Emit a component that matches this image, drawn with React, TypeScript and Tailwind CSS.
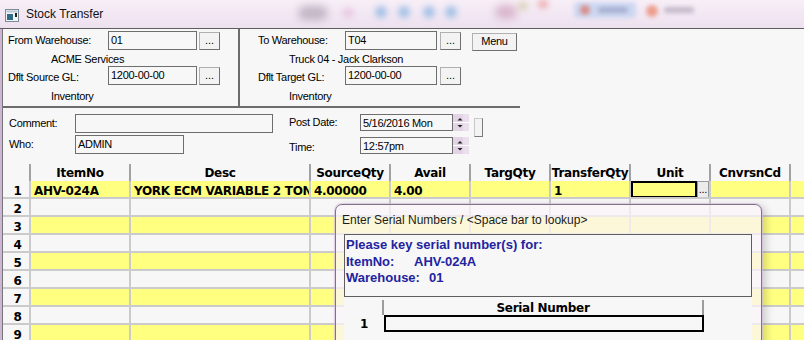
import React from "react";

const sans = "font-['Liberation_Sans',Arial,sans-serif]";
const lbl = `${sans} text-[11px] tracking-[-0.3px] text-black whitespace-nowrap`;
const gridFont = "font-['DejaVu_Sans',Verdana,sans-serif] font-bold text-[12px] tracking-[-0.3px] text-black whitespace-nowrap";

const columns = [
  { title: "ItemNo", w: "w-[100px]" },
  { title: "Desc", w: "w-[180px]" },
  { title: "SourceQty", w: "w-[80px]" },
  { title: "Avail", w: "w-[80px]" },
  { title: "TargQty", w: "w-[80px]" },
  { title: "TransferQty", w: "w-[80px]" },
  { title: "Unit", w: "w-[80px]" },
  { title: "CnvrsnCd", w: "w-[80px]" },
  { title: "", w: "w-[40px]" },
];

const firstRow = ["AHV-024A", "YORK ECM VARIABLE 2 TON", "4.00000", "4.00", "", "1", "", "", ""];

function Field({ w, h, value, muted }: { w: string; h: string; value?: string; muted?: boolean }) {
  return (
    <div className={`${w} ${h} shrink-0 border border-[#6e6e6e] bg-[#f7f7f7] pl-[2px] pt-[2px] ${lbl} leading-[13px] ${muted ? "text-[#8c8c8c]" : ""}`}>
      {value}
    </div>
  );
}

function Dots({ ml }: { ml: string }) {
  return (
    <div className={`${ml} flex h-[18px] w-[21px] shrink-0 items-end justify-center border border-[#b0b0b0] border-b-[#6f6f6f] border-r-[#6f6f6f] bg-[#f3f3f3] pb-[3px] ${sans} text-[11px] leading-none`}>
      ...
    </div>
  );
}

function Spinner() {
  return (
    <svg width="16" height="17" viewBox="0 0 16 17" className="shrink-0">
      <rect width="16" height="17" fill="#eadfec" />
      <rect x="0" y="0" width="10" height="17" fill="#e2d3e5" />
      <line x1="0" y1="8.5" x2="16" y2="8.5" stroke="#ffffff" />
      <path d="M4.5 6.5h5L7 4z" fill="#222" />
      <path d="M4.5 11h5L7 13.5z" fill="#222" />
    </svg>
  );
}

export default function App() {
  return (
    <div className="relative h-[340px] w-[804px] overflow-hidden bg-[#f7f7f7]">
      {/* Title bar */}
      <div className="relative flex h-[29px] items-center overflow-hidden border-b border-[#5e5e5e] bg-[linear-gradient(to_bottom,#f7eff7,#ede1ef)]">
        <span className="absolute left-[298px] top-[6px] h-[14px] w-[30px] rounded-full bg-[#a092a6] opacity-60 blur-[4px]" />
        <span className="absolute left-[342px] top-[8px] h-[10px] w-[12px] rounded-full bg-[#e2b4d6] opacity-60 blur-[3px]" />
        <span className="absolute left-[375px] top-[6px] h-[12px] w-[12px] rounded-full bg-[#6fa6de] opacity-60 blur-[3px]" />
        <span className="absolute left-[398px] top-[6px] h-[12px] w-[12px] rounded-full bg-[#6fa6de] opacity-60 blur-[3px]" />
        <span className="absolute left-[423px] top-[6px] h-[12px] w-[12px] rounded-full bg-[#6fa6de] opacity-60 blur-[3px]" />
        <span className="absolute left-[445px] top-[6px] h-[12px] w-[12px] rounded-full bg-[#6fa6de] opacity-60 blur-[3px]" />
        <span className="absolute left-[495px] top-[5px] h-[14px] w-[22px] rounded-full bg-[#c792b0] opacity-60 blur-[4px]" />
        <span className="absolute left-[518px] top-[2px] h-[8px] w-[10px] rounded-full bg-[#c9c08c] opacity-60 blur-[3px]" />
        <span className="absolute left-[538px] top-[0px] h-[8px] w-[10px] rounded-full bg-[#e77a7a] opacity-60 blur-[3px]" />
        <span className="absolute left-[574px] top-[2px] h-[16px] w-[62px] rounded-[4px] bg-[#bcd0f0] opacity-70 blur-[2px]" />
        <span className="absolute left-[580px] top-[5px] h-[10px] w-[10px] rounded-full bg-[#e0705e] opacity-70 blur-[2px]" />
        <span className="absolute left-[598px] top-[7px] h-[6px] w-[30px] rounded-full bg-[#8f96bb] opacity-60 blur-[2px]" />
        <span className="absolute left-[646px] top-[5px] h-[12px] w-[12px] rounded-full bg-[#ea7e62] opacity-70 blur-[2px]" />
        <span className="absolute left-[664px] top-[7px] h-[6px] w-[30px] rounded-full bg-[#a39aaf] opacity-60 blur-[2px]" />
        <svg width="14" height="13" viewBox="0 0 14 13" className="relative ml-[5px] mt-[3px]">
          <rect x="0.5" y="0.5" width="13" height="12" fill="#f4f4f4" stroke="#7a8a96" />
          <rect x="1.5" y="1.5" width="11" height="2" fill="#b8c8d8" />
          <rect x="2" y="5" width="6" height="6" fill="#2d6e86" />
          <rect x="10" y="4" width="2" height="4" fill="#202020" />
        </svg>
        <span className={`relative ml-[7px] ${sans} text-[12px] text-[#111]`}>Stock Transfer</span>
      </div>

      {/* Window body */}
      <div className="h-[311px] border-l-2 border-[#cdb6d3]">
        <div className="h-full border-l border-[#767676]">
          {/* Header panels */}
          <div className="flex h-[79px]">
            <div className="flex w-[237px] flex-col border-b-2 border-r-2 border-[#6c6c6c] pl-[5px] pt-[2px]">
              <div className="flex h-[19px] items-center">
                <span className={`w-[100px] ${lbl}`}>From Warehouse:</span>
                <Field w="w-[89px]" h="h-[19px]" value="01" />
                <Dots ml="ml-[2px]" />
              </div>
              <div className={`flex h-[16px] items-center pl-[43px] pt-[2px] ${lbl}`}>ACME Services</div>
              <div className="flex h-[19px] items-center">
                <span className={`w-[100px] pt-[3px] ${lbl}`}>Dflt Source GL:</span>
                <Field w="w-[89px]" h="h-[19px]" value="1200-00-00" />
                <Dots ml="ml-[2px]" />
              </div>
              <div className={`flex h-[18px] items-center pl-[43px] pt-[4px] ${lbl}`}>Inventory</div>
            </div>
            <div className="flex w-[280px] flex-col border-b-2 border-[#6c6c6c] pl-[18px] pt-[2px]">
              <div className="flex h-[19px] items-center">
                <span className={`w-[87px] ${lbl}`}>To Warehouse:</span>
                <Field w="w-[92px]" h="h-[19px]" value="T04" />
                <Dots ml="ml-[3px]" />
                <div className={`ml-[11px] mt-[2px] flex h-[18px] w-[45px] items-center justify-center border border-[#b0b0b0] border-b-[#6f6f6f] border-r-[#6f6f6f] bg-[#f3f3f3] ${lbl}`}>
                  Menu
                </div>
              </div>
              <div className={`flex h-[16px] items-center pl-[31px] pt-[2px] ${lbl}`}>Truck 04 - Jack Clarkson</div>
              <div className="flex h-[19px] items-center">
                <span className={`w-[87px] pt-[3px] ${lbl}`}>Dflt Target GL:</span>
                <Field w="w-[92px]" h="h-[19px]" value="1200-00-00" />
                <Dots ml="ml-[3px]" />
              </div>
              <div className={`flex h-[18px] items-center pl-[31px] pt-[4px] ${lbl}`}>Inventory</div>
            </div>
          </div>

          {/* Comment / dates */}
          <div className="flex h-[52px] pt-[6px]">
            <div className="flex w-[270px] flex-col gap-[2px] pl-[6px]">
              <div className="flex items-center">
                <span className={`w-[66px] ${lbl}`}>Comment:</span>
                <Field w="w-[198px]" h="h-[19px]" />
              </div>
              <div className="flex items-center">
                <span className={`w-[66px] ${lbl}`}>Who:</span>
                <Field w="w-[109px]" h="h-[19px]" value="ADMIN" muted />
              </div>
            </div>
            <div className="flex pl-[16px]">
              <div className="flex flex-col gap-[5px]">
                <div className="flex items-center">
                  <span className={`w-[71px] ${lbl}`}>Post Date:</span>
                  <Field w="w-[93px]" h="h-[17px]" value="5/16/2016 Mon" />
                  <Spinner />
                </div>
                <div className="flex items-center">
                  <span className={`w-[71px] pt-[3px] ${lbl}`}>Time:</span>
                  <Field w="w-[93px]" h="h-[17px]" value="12:57pm" />
                  <Spinner />
                </div>
              </div>
              <div className="ml-[5px] mt-[4px] h-[19px] w-[9px] border border-[#c8c8c8] border-b-[#7a7a7a] border-r-[#7a7a7a] bg-[#f3f3f3]" />
            </div>
          </div>

          {/* Grid */}
          <div className={gridFont}>
            <div className="flex h-[21px] pt-[4px]">
              <div className="h-[17px] w-[28px] shrink-0 border-r-2 border-[#a2a2a2]" />
              {columns.map((c, i) => (
                <div key={i} className={`${c.w} flex h-[17px] shrink-0 items-center justify-center border-r-2 border-[#a2a2a2]`}>
                  {c.title}
                </div>
              ))}
            </div>
            {[1, 2, 3, 4, 5, 6, 7, 8, 9].map((n) => (
              <div key={n} className="flex h-[18px] border-b-2 border-[#cbcbcb]">
                <div className="flex h-[16px] w-[28px] shrink-0 items-center justify-center border-r-2 border-[#cbcbcb] pl-[3px] pt-[3px]">
                  {n}
                </div>
                {columns.map((c, i) => (
                  <div
                    key={i}
                    className={`${c.w} flex h-[16px] shrink-0 items-center overflow-hidden border-r-2 border-[#cbcbcb] ${n % 2 === 1 ? "bg-[#ffff80]" : "bg-[#f7f7f7]"} ${n === 1 && c.title === "Unit" ? "" : "pl-[3px] pt-[3px]"}`}
                  >
                    {n === 1 && c.title === "Unit" ? (
                      <div className="flex h-[17px] w-full">
                        <div className="flex-1 border-2 border-black" />
                        <div className={`flex w-[12px] items-end justify-center border border-[#9a9a9a] bg-[#ececec] pb-[2px] ${sans} text-[11px] font-normal leading-none`}>
                          ...
                        </div>
                      </div>
                    ) : (
                      n === 1 && firstRow[i]
                    )}
                  </div>
                ))}
              </div>
            ))}
          </div>
        </div>
      </div>

      {/* Serial numbers dialog */}
      <div className="absolute left-[335px] top-[204px] h-[150px] w-[427px] rounded-t-[7px] border border-[#7f7485] bg-[rgba(250,244,250,0.72)] shadow-[0_0_0_1px_rgba(214,190,222,0.7),4px_2px_8px_rgba(0,0,0,0.18)]">
        <div className={`flex h-[29px] items-center pl-[6px] ${sans} text-[12px] text-[#1c1c1c]`}>
          Enter Serial Numbers / &lt;Space bar to lookup&gt;
        </div>
        <div className="ml-[8px] mr-[9px] h-[120px] bg-[#f7f7f7]">
          <div className={`h-[63px] border border-[#5f5f5f] pl-[1px] pt-[2px] ${sans} text-[13px] font-bold leading-[16.5px] text-[#2323a0]`}>
            <div>Please key serial number(s) for:</div>
            <div className="flex">
              <span className="w-[68px]">ItemNo:</span>
              <span>AHV-024A</span>
            </div>
            <div className="flex">
              <span>Warehouse:</span>
              <span className="ml-[9px]">01</span>
            </div>
          </div>
          <div className={`mt-[3px] flex h-[15px] ${gridFont}`}>
            <div className="w-[40px] border-r-2 border-[#9c9c9c]" />
            <div className="flex w-[320px] items-center justify-center border-r-2 border-[#9c9c9c]">Serial Number</div>
          </div>
          <div className={`flex h-[17px] ${gridFont}`}>
            <div className="flex w-[40px] items-center justify-center pt-[1px]">1</div>
            <div className="w-[320px] border-2 border-black" />
          </div>
        </div>
      </div>
    </div>
  );
}
